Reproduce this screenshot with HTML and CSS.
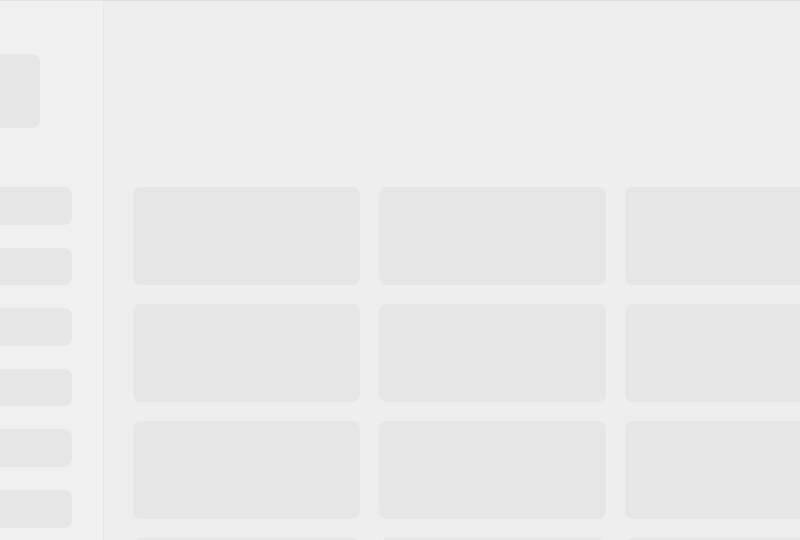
FILE: index.html
```html
<!DOCTYPE html>
<html lang="en">
<head>
<meta charset="utf-8">
<title>Loading</title>
<link rel="stylesheet" href="styles.css">
</head>
<body>
<div class="app">
  <aside class="sidebar">
    <div class="sk sk-logo"></div>
    <nav class="nav">
      <div class="sk sk-item"></div>
      <div class="sk sk-item"></div>
      <div class="sk sk-item"></div>
      <div class="sk sk-item"></div>
      <div class="sk sk-item"></div>
      <div class="sk sk-item"></div>
    </nav>
  </aside>
  <main class="main">
    <div class="grid">
      <div class="sk sk-card"></div>
      <div class="sk sk-card"></div>
      <div class="sk sk-card"></div>
      <div class="sk sk-card"></div>
      <div class="sk sk-card"></div>
      <div class="sk sk-card"></div>
      <div class="sk sk-card"></div>
      <div class="sk sk-card"></div>
      <div class="sk sk-card"></div>
      <div class="sk sk-card"></div>
      <div class="sk sk-card"></div>
      <div class="sk sk-card"></div>
    </div>
  </main>
</div>
</body>
</html>
```
FILE: styles.css
```css
html, body {
  margin: 0;
  padding: 0;
  height: 100%;
  overflow: hidden;
  background: #eeeeee;
  font-family: "Liberation Sans", Arial, sans-serif;
}
.app {
  display: flex;
  height: 540px;
  box-sizing: border-box;
  border-top: 1px solid #e1e1e1;
  overflow: hidden;
}
.sidebar {
  width: 103px;
  flex: none;
  background: #f0f0f0;
  border-right: 1px solid #e7e7e7;
  display: flex;
  flex-direction: column;
  overflow: hidden;
}
.sk {
  background: #e6e6e6;
  border-radius: 8px;
}
.sk-logo {
  margin-top: 53px;
  margin-left: -40px;
  width: 80px;
  height: 74px;
  flex: none;
}
.nav {
  margin-top: 59px;
  margin-left: -40px;
  width: 112px;
  display: flex;
  flex-direction: column;
  gap: 23px;
}
.sk-item {
  height: 37.6px;
  flex: none;
}
.main {
  flex: 1;
  padding: 186px 0 0 29px;
  overflow: hidden;
}
.grid {
  display: grid;
  grid-template-columns: repeat(3, 227px);
  grid-auto-rows: 98px;
  gap: 19px;
}
```
